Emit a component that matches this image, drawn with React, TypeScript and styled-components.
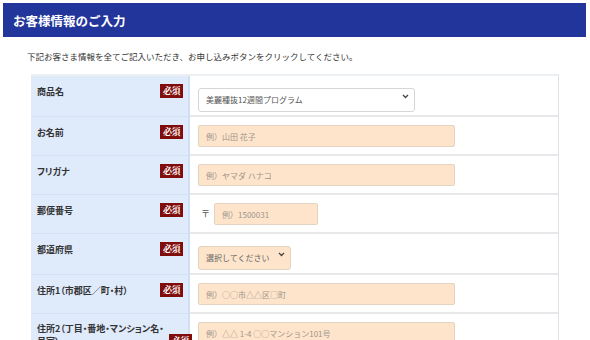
import { createGlobalStyle, styled } from "styled-components";

const GlobalStyle = createGlobalStyle`
    html, body {
        margin: 0;
        padding: 0;
        background: #fff;
    }
    body {
        font-family: "Noto Sans CJK JP", "Noto Sans", sans-serif;
        color: #333;
    }
`;

const Page = styled.div`
    width: 590px;
    height: 340px;
    overflow: hidden;
    padding: 3px 4px 0 3px;
    box-sizing: border-box;
`;

const Header = styled.h2`
    margin: 0;
    height: 34px;
    background: #21359a;
    color: #fff;
    font-size: 12.5px;
    font-weight: bold;
    display: flex;
    align-items: center;
    padding-left: 10px;
`;

const Lead = styled.p`
    margin: 12px 0 0 24px;
    font-size: 8.5px;
    line-height: 14px;
    color: #333;
`;

const Table = styled.div`
    margin: 11px 0 0 28px;
    width: 527px;
    border-top: 2px solid #edf0f3;
    border-right: 1px solid #dde2e6;
`;

const Row = styled.div`
    display: grid;
    grid-template-columns: 159px 1fr;
    min-height: 37px;
    border-bottom: 2px solid #e6e8ea;
`;

const LabelCell = styled.div`
    background: #dfeafb;
    border-right: 2px solid #cfe0f6;
    border-bottom: 1px solid #d3e1f3;
    margin-bottom: -2px;
    padding: 8px 5px 6px 6px;
    display: grid;
    grid-template-columns: 1fr 23px;
    column-gap: 5px;
    align-items: end;
    align-content: start;
`;

const LabelText = styled.span`
    font-size: 9px;
    font-weight: bold;
    line-height: 13px;
    color: #333;
    white-space: pre;
    font-feature-settings: "palt";
`;

const Required = styled.span`
    height: 14px;
    background: #800c0c;
    color: #fff;
    font-family: "Liberation Serif", "Noto Serif CJK JP", serif;
    font-size: 9px;
    font-weight: bold;
    line-height: 14px;
    text-align: center;
    letter-spacing: -0.5px;
`;

const ValueCell = styled.div`
    padding: 8px 10px 7px 8px;
    display: flex;
    align-items: flex-start;
    gap: 4px;
`;

const TextField = styled.input<{ $width: number }>`
    width: ${(p) => p.$width}px;
    height: 22px;
    box-sizing: border-box;
    background: #fde4cb;
    border: 1px solid #e3d3c3;
    border-radius: 2px;
    padding: 0 7px;
    font-family: "Noto Sans CJK JP", sans-serif;
    font-size: 8px;
    color: #333;
    outline: none;

    &::placeholder {
        color: #9d948c;
    }
`;

const SelectWrap = styled.div<{ $width: number }>`
    position: relative;
    width: ${(p) => p.$width}px;
    height: 24px;
`;

const Select = styled.select<{ $filled?: boolean }>`
    appearance: none;
    width: 100%;
    height: 100%;
    box-sizing: border-box;
    background: ${(p) => (p.$filled ? "#fde4cb" : "#fff")};
    border: 1px solid ${(p) => (p.$filled ? "#e3d3c3" : "#d6d6d6")};
    border-radius: 3px;
    padding: 0 7px;
    font-family: "Noto Sans CJK JP", sans-serif;
    font-size: 8px;
    color: ${(p) => (p.$filled ? "#666" : "#555")};
    outline: none;
`;

const Chevron = styled.svg`
    position: absolute;
    right: 6px;
    top: 10px;
    width: 7px;
    height: 5px;
    pointer-events: none;
`;

const Postal = styled.span`
    font-size: 9px;
    line-height: 22px;
    color: #555;
    padding-left: 3px;
`;

function Field({ label, children }: { label: string; children: React.ReactNode }) {
    return (
        <Row>
            <LabelCell>
                <LabelText>{label}</LabelText>
                <Required>必須</Required>
            </LabelCell>
            <ValueCell>{children}</ValueCell>
        </Row>
    );
}

function Dropdown({ width, filled, options }: { width: number; filled?: boolean; options: string[] }) {
    return (
        <SelectWrap $width={width}>
            <Select $filled={filled} defaultValue={options[0]}>
                {options.map((o) => (
                    <option key={o}>{o}</option>
                ))}
            </Select>
            <Chevron viewBox="0 0 7 5">
                <path d="M1 1l2.5 2.5L6 1" fill="none" stroke="#444" strokeWidth="1.3" />
            </Chevron>
        </SelectWrap>
    );
}

export default function App() {
    return (
        <>
            <GlobalStyle />
            <Page>
                <Header>お客様情報のご入力</Header>
                <Lead>下記お客さま情報を全てご記入いただき、お申し込みボタンをクリックしてください。</Lead>
                <Table>
                    <Field label="商品名">
                        <Dropdown width={217} options={["美麗種抜12週間プログラム"]} />
                    </Field>
                    <Field label="お名前">
                        <TextField $width={257} placeholder="例）山田 花子" />
                    </Field>
                    <Field label="フリガナ">
                        <TextField $width={257} placeholder="例）ヤマダ ハナコ" />
                    </Field>
                    <Field label="郵便番号">
                        <Postal>〒</Postal>
                        <TextField $width={104} placeholder="例）1500031" />
                    </Field>
                    <Field label="都道府県">
                        <Dropdown width={93} filled options={["選択してください"]} />
                    </Field>
                    <Field label="住所1（市郡区／町・村）">
                        <TextField $width={257} placeholder="例）○○市△△区□町" />
                    </Field>
                    <Field label={"住所2（丁目・番地・マンション名・\n号室）"}>
                        <TextField $width={257} placeholder="例）△△ 1-4 ○○マンション101号" />
                    </Field>
                </Table>
            </Page>
        </>
    );
}
